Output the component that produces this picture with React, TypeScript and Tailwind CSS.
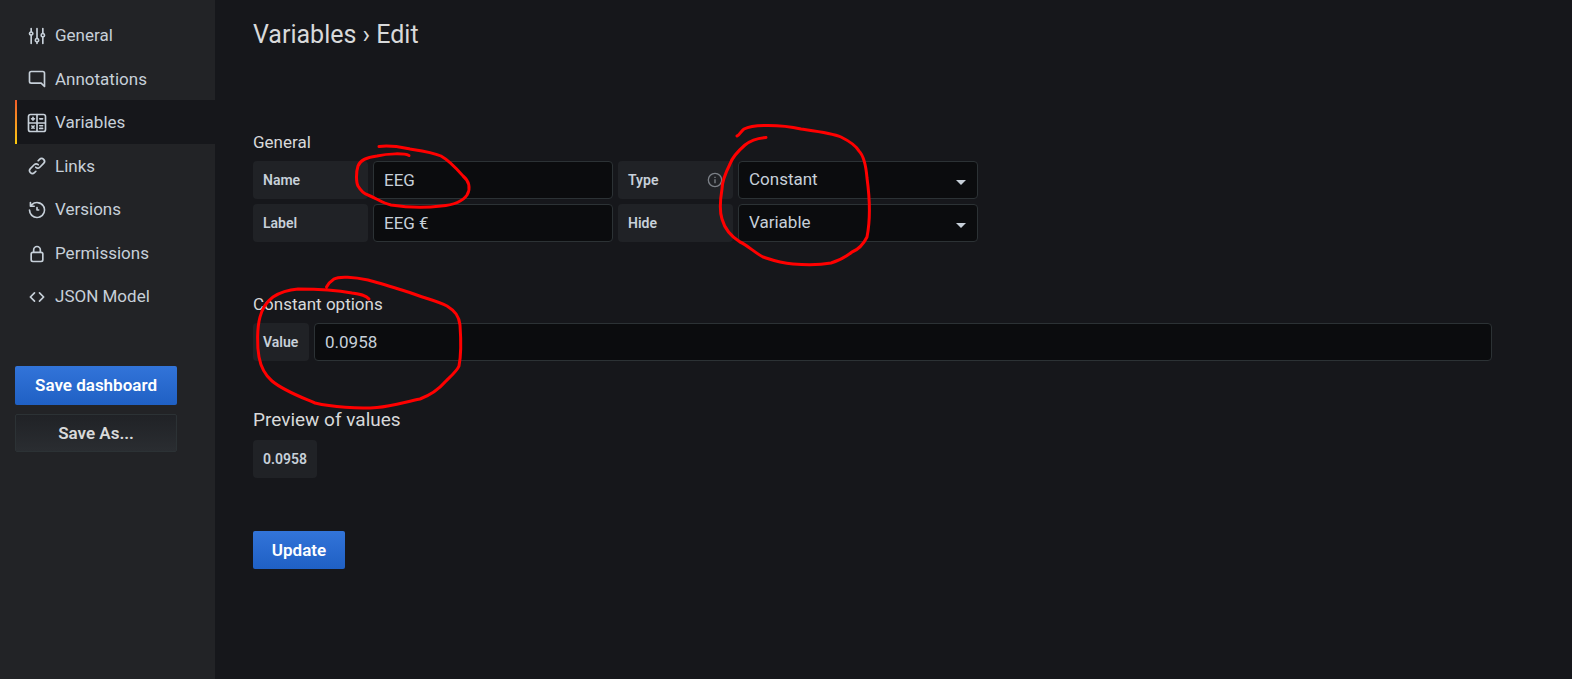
import type { ReactNode } from 'react'

const navItems: { label: string; icon: ReactNode; active?: boolean }[] = [
  {
    label: 'General',
    icon: (
      <path d="M20,8.18V3a1,1,0,0,0-2,0V8.18a3,3,0,0,0,0,5.64V21a1,1,0,0,0,2,0V13.82a3,3,0,0,0,0-5.64ZM19,12a1,1,0,1,1,1-1A1,1,0,0,1,19,12Zm-6,2.18V3a1,1,0,0,0-2,0V14.18a3,3,0,0,0,0,5.64V21a1,1,0,0,0,2,0V19.82a3,3,0,0,0,0-5.64ZM12,18a1,1,0,1,1,1-1A1,1,0,0,1,12,18ZM6,6.18V3A1,1,0,0,0,4,3V6.18a3,3,0,0,0,0,5.64V21a1,1,0,0,0,2,0V11.82A3,3,0,0,0,6,6.18ZM5,10A1,1,0,1,1,6,9,1,1,0,0,1,5,10Z" />
    ),
  },
  {
    label: 'Annotations',
    icon: (
      <path d="M19,2H5A3,3,0,0,0,2,5V15a3,3,0,0,0,3,3H16.59l3.7,3.71A1,1,0,0,0,21,22a.84.84,0,0,0,.38-.08A1,1,0,0,0,22,21V5A3,3,0,0,0,19,2Zm1,16.59-2.29-2.3A1,1,0,0,0,17,16H5a1,1,0,0,1-1-1V5A1,1,0,0,1,5,4H19a1,1,0,0,1,1,1Z" />
    ),
  },
  {
    label: 'Variables',
    active: true,
    icon: (
      <g fill="none" stroke="currentColor" strokeWidth="2" strokeLinecap="round">
        <rect x="1.800" y="1.800" width="20.400" height="20.400" rx="2.5" />
        <path d="M12 2v20M2 12h20M5.500 7h3.400M7.200 5.300v3.400M15.300 7h3.400M15.300 15.300h3.400M15.300 18.500h3.400M5.900 15.600l2.600 2.600M8.500 15.600l-2.600 2.600" />
      </g>
    ),
  },
  {
    label: 'Links',
    icon: (
      <path d="M10,17.55,8.23,19.27a2.47,2.47,0,0,1-3.5-3.5l4.54-4.55a2.46,2.46,0,0,1,3.39-.09l.12.1a1,1,0,0,0,1.4-1.43A2.75,2.75,0,0,0,14,9.59a4.46,4.46,0,0,0-6.09.22L3.31,14.36a4.48,4.48,0,0,0,6.33,6.33L11.37,19A1,1,0,0,0,10,17.55ZM20.69,3.31a4.49,4.49,0,0,0-6.33,0L12.63,5A1,1,0,0,0,14,6.45l1.73-1.72a2.47,2.47,0,0,1,3.5,3.5l-4.54,4.55a2.46,2.46,0,0,1-3.39.09l-.12-.1a1,1,0,0,0-1.4,1.43,2.75,2.75,0,0,0,.23.21,4.47,4.47,0,0,0,6.09-.22l4.55-4.55A4.49,4.49,0,0,0,20.69,3.31Z" />
    ),
  },
  {
    label: 'Versions',
    icon: (
      <path d="M12,2A10,10,0,0,0,5.12,4.77V3a1,1,0,0,0-2,0V7.5a1,1,0,0,0,1,1H8.62a1,1,0,0,0,0-2H6.22A8,8,0,1,1,4,12a1,1,0,0,0-2,0A10,10,0,1,0,12,2Zm0,6a1,1,0,0,0-1,1v3a1,1,0,0,0,1,1h2a1,1,0,0,0,0-2H13V9A1,1,0,0,0,12,8Z" />
    ),
  },
  {
    label: 'Permissions',
    icon: (
      <path d="M17,9V7A5,5,0,0,0,7,7V9a3,3,0,0,0-3,3v7a3,3,0,0,0,3,3H17a3,3,0,0,0,3-3V12A3,3,0,0,0,17,9ZM9,7a3,3,0,0,1,6,0V9H9Zm9,12a1,1,0,0,1-1,1H7a1,1,0,0,1-1-1V12a1,1,0,0,1,1-1H17a1,1,0,0,1,1,1Z" />
    ),
  },
  {
    label: 'JSON Model',
    icon: (
      <path d="M9.71,6.29a1,1,0,0,0-1.42,0l-5,5a1,1,0,0,0,0,1.42l5,5a1,1,0,0,0,1.42,0,1,1,0,0,0,0-1.42L5.41,12l4.3-4.29A1,1,0,0,0,9.71,6.29Zm11,5-5-5a1,1,0,0,0-1.42,1.42L18.59,12l-4.3,4.29a1,1,0,0,0,0,1.42,1,1,0,0,0,1.42,0l5-5A1,1,0,0,0,20.71,11.29Z" />
    ),
  },
]

const labelClass =
  'flex h-[38px] min-w-14 shrink-0 items-center justify-between rounded-sm bg-[#202226] px-2.5 text-sm font-semibold text-[#c7d0d9]'
const fieldClass =
  'h-[38px] rounded-sm border border-[#2c3235] bg-[#0b0c0e] px-2.5 text-[17px] text-[#c7d0d9] outline-none'
const primaryClass =
  'rounded-xs bg-linear-to-b from-[#3274d9] to-[#1f60c4] pt-px text-[17px] font-semibold text-white'

function SelectField({ id, value }: { id: string; value: string }) {
  return (
    <div className="relative w-60">
      <select id={id} defaultValue={value} className={`${fieldClass} w-full appearance-none`}>
        <option>{value}</option>
      </select>
      <svg viewBox="0 0 10 5" className="pointer-events-none absolute top-[19px] right-3 h-[5px] w-2.5" fill="#c7d0d9">
        <path d="M0 0h10L5 5z" />
      </svg>
    </div>
  )
}

function Sidebar() {
  return (
    <aside className="w-[215px] shrink-0 bg-[#222326] pt-[13px] pl-[15px]">
      <nav className="grid h-[305px] auto-rows-fr">
        {navItems.map((item) => (
          <a
            key={item.label}
            href="#"
            className={`relative flex items-center gap-2 pt-0.5 pl-3 text-[17px] text-[#c7d0d9] ${item.active ? 'bg-[#16171b]' : ''}`}
          >
            {item.active && (
              <span className="absolute inset-y-0 left-0 w-0.5 bg-linear-to-b from-[#f05a28] to-[#fbca0a]" />
            )}
            <svg viewBox="0 0 24 24" className="size-5" fill="currentColor" aria-hidden="true">
              {item.icon}
            </svg>
            {item.label}
          </a>
        ))}
      </nav>
      <div className="mt-12 flex w-[162px] flex-col gap-[9px]">
        <button className={`${primaryClass} h-[39px]`}>Save dashboard</button>
        <button className="h-[38px] rounded-xs border border-[#2c3235] bg-linear-to-b from-[#202226] to-[#2a2d31] pt-px text-[17px] font-semibold text-[#d8d9da]">
          Save As...
        </button>
      </div>
    </aside>
  )
}

// hand-drawn circles around the fields that matter
function Markers() {
  return (
    <svg
      width="1572"
      height="679"
      viewBox="0 0 1572 679"
      className="pointer-events-none absolute top-0 left-0 max-w-none"
      fill="none"
      stroke="#ff0000"
      strokeWidth="3"
      strokeLinecap="round"
      strokeLinejoin="round"
      aria-hidden="true"
    >
      <path d="M409 155.500C404 153 388 153.500 377 156C366 157.500 360 160 358 166C356 172 356 182 358 186C361 191 364 194 368 195C376 198 382 203 391 205C404 207 425 208 441 206C454 205 463 201 467 195C471 188 469 181 463 176C456 168 450 161 441 156C432 152 420 150.500 410 149C400 147 392 145 379 146.500" />
      <path d="M766 137.500C757 138 751 140 745 145C737 152 732 158 730 164C725 174 722 181 722 189C720 201 720 213 722 219C725 230 732 237 740 242C747 245 754 252 763 257C772 260 780 263 793 264C806 265 820 265 831 263C841 260 847 256 852 252C860 249 864 243 867 237C870 222 870 200 867 178C866 166 864 156 859 151C855 144 847 140 841 137C832 133 815 131 801 129C788 126 779 125.500 768 125.500C758 125.500 748 127 744 129C741 131 740 135 737 136" />
      <path d="M369 299C366 295 360 294 352 293C336 290 312 289 298 289C286 290 279 293 273 297C265 303 262 309 260 317C257 328 257 346 259 357C261 368 265 375 272 381C284 391 301 397 315 403C332 407 358 409 377 407.500C392 406 405 402 420 399C433 394 439 389 445 382C451 376 457 371 459 366C461 356 461 339 460 325C459 316 455 311 447 306C438 301 424 298 411 293C395 288 380 283 368 280C354 277 339 276 334 279C331 281 328 284 326.500 287" />
    </svg>
  )
}

export default function App() {
  return (
    <div className="relative flex min-h-screen overflow-hidden bg-[#16171b] font-[Roboto,sans-serif] text-[#d8d9da]">
      <Sidebar />

      <main className="min-w-0 flex-1 pt-[17px] pr-20 pb-10 pl-[38px]">
        <h1 className="text-[25px] leading-9">Variables › Edit</h1>

        <form onSubmit={(e) => e.preventDefault()}>
          <h2 className="mt-[77px] text-[17px] leading-6">General</h2>
          <div className="mt-[7px] grid grid-cols-[115px_240px_115px_240px] gap-[5px]">
            <label htmlFor="name" className={labelClass}>
              Name
            </label>
            <input id="name" defaultValue="EEG" className={fieldClass} />
            <label htmlFor="type" className={labelClass}>
              Type
              <svg viewBox="0 0 24 24" className="size-4 text-[#7b8087]" fill="none" stroke="currentColor" strokeWidth="2">
                <circle cx="12" cy="12" r="10" />
                <path d="M12 11v6M12 7v2" />
              </svg>
            </label>
            <SelectField id="type" value="Constant" />
            <label htmlFor="label" className={labelClass}>
              Label
            </label>
            <input id="label" defaultValue="EEG €" className={fieldClass} />
            <label htmlFor="hide" className={labelClass}>
              Hide
            </label>
            <SelectField id="hide" value="Variable" />
          </div>

          <h2 className="mt-[50px] text-[17px] leading-6">Constant options</h2>
          <div className="mt-[7px] flex gap-[5px]">
            <label htmlFor="value" className={labelClass}>
              Value
            </label>
            <input id="value" defaultValue="0.0958" className={`${fieldClass} min-w-0 flex-1`} />
          </div>

          <h2 className="mt-[47px] text-[19px] leading-6">Preview of values</h2>
          <div className="mt-2 flex">
            <span className={labelClass}>0.0958</span>
          </div>

          <button className={`${primaryClass} mt-[53px] h-[38px] w-[92px]`}>Update</button>
        </form>
      </main>

      <Markers />
    </div>
  )
}
